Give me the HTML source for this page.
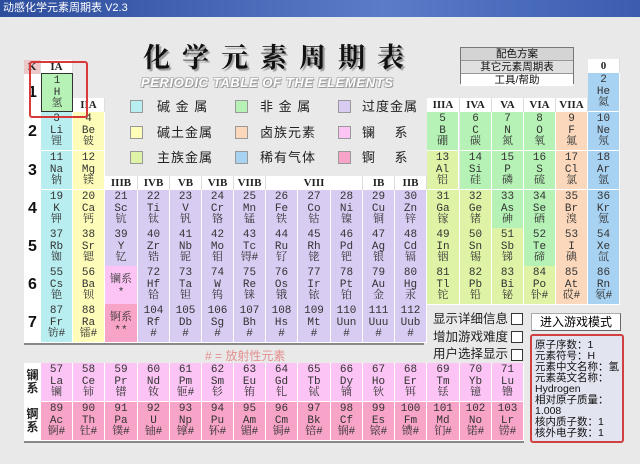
<!DOCTYPE html>
<html><head><meta charset="utf-8"><style>
*{margin:0;padding:0;box-sizing:border-box}
body{width:640px;height:464px;overflow:hidden;background:#e9e9e9;position:relative;font-family:"Liberation Sans","Noto Sans CJK SC",sans-serif}
.tb{position:absolute;left:0;top:0;width:640px;height:17px;background:linear-gradient(90deg,#2c4c9c,#5a7cc8 60%,#3c5cb0);color:#fff;font-size:11px;line-height:17px;padding-left:3px}
.e{position:absolute;width:32px;height:39px;border-right:1px solid #fff;border-bottom:1px solid #fff;text-align:center;font-family:"Liberation Mono","Noto Serif CJK SC",monospace;font-size:11px;line-height:11.5px;padding-top:2px;color:#333}
.a{background:#b8eef0}.b{background:#fdfcb8}.t{background:#d8ccf2}.n{background:#b6f2b6}.h{background:#fbd8bc}.g{background:#a8d2f2}.m{background:#dff3a6}.l{background:#fbc4f4}.k{background:#f8a4c8}
.hd{position:absolute;height:14px;background:#fff;font-family:"Liberation Serif",serif;font-weight:bold;font-size:11px;line-height:14px;text-align:center;color:#222;border-right:1px solid #ddd}
.pl{position:absolute;left:24px;width:17px;font:bold 16px "Liberation Sans",sans-serif;text-align:center;color:#111}
.sq{position:absolute;width:13px;height:13px;border:1px solid #999}
.lt{position:absolute;font-size:13px;color:#222;line-height:14px;letter-spacing:1px;white-space:nowrap}
.cb{position:absolute;width:12px;height:12px;border:1px solid #333;background:#fff}
</style></head><body>
<div class="tb">动感化学元素周期表 V2.3</div>
<div style="position:absolute;left:143px;top:36px;font:bold 27px 'Noto Serif CJK SC',serif;letter-spacing:12px;color:#111;text-shadow:2px 2px 1px #999">化学元素周期表</div>
<div style="position:absolute;left:141px;top:75px;font:bold italic 13px 'Liberation Sans',sans-serif;color:#fff;letter-spacing:0.6px;text-shadow:1px 1px 0 #999,-1px -1px 0 #bbb,1px -1px 0 #bbb,-1px 1px 0 #bbb">PERIODIC TABLE OF THE ELEMENTS</div>

<div style="position:absolute;left:460px;top:47px;width:114px;height:37px;border:1px solid #777;font-size:10.5px;text-align:center;line-height:12px;color:#111">
<div style="background:#d4d4d4;border-bottom:1px solid #999">配色方案</div>
<div style="background:#e0e0e0;border-bottom:1px solid #999">其它元素周期表</div>
<div style="background:#fff">工具/帮助</div></div>

<div class="sq a" style="left:130px;top:100px"></div><div class="lt" style="left:157px;top:100px">碱 金 属</div>
<div class="sq b" style="left:130px;top:126px"></div><div class="lt" style="left:157px;top:126px">碱土金属</div>
<div class="sq m" style="left:130px;top:151px"></div><div class="lt" style="left:157px;top:151px">主族金属</div>
<div class="sq n" style="left:235px;top:100px"></div><div class="lt" style="left:260px;top:100px">非 金 属</div>
<div class="sq h" style="left:235px;top:126px"></div><div class="lt" style="left:260px;top:126px">卤族元素</div>
<div class="sq g" style="left:235px;top:151px"></div><div class="lt" style="left:260px;top:151px">稀有气体</div>
<div class="sq t" style="left:338px;top:100px"></div><div class="lt" style="left:362px;top:100px">过度金属</div>
<div class="sq l" style="left:338px;top:126px"></div><div class="lt" style="left:362px;top:126px">镧&nbsp;&nbsp;&nbsp;&nbsp;系</div>
<div class="sq k" style="left:338px;top:151px"></div><div class="lt" style="left:362px;top:151px">锕&nbsp;&nbsp;&nbsp;&nbsp;系</div>

<div style="position:absolute;left:24px;top:73px;width:17px;height:270px;background:#fff"></div>
<div style="position:absolute;left:24px;top:343px;width:400px;height:2px;background:#888"></div>
<div class="hd" style="left:24px;top:60px;width:17px;background:#ecc8c8">K</div>
<div class="hd" style="left:41px;top:60px;width:32px">IA</div>
<div class="hd" style="left:73px;top:98px;width:32px">IIA</div>
<div class="hd" style="left:588px;top:59px;width:32px">0</div>
<div class="pl" style="top:84px">1</div><div class="pl" style="top:123px">2</div><div class="pl" style="top:162px">3</div><div class="pl" style="top:200px">4</div><div class="pl" style="top:238px">5</div><div class="pl" style="top:276px">6</div><div class="pl" style="top:314px">7</div>
<div class="hd" style="left:105px;top:176px;width:33px">IIIB</div><div class="hd" style="left:138px;top:176px;width:32px">IVB</div><div class="hd" style="left:170px;top:176px;width:32px">VB</div><div class="hd" style="left:202px;top:176px;width:32px">VIB</div><div class="hd" style="left:234px;top:176px;width:32px">VIIB</div><div class="hd" style="left:266px;top:176px;width:97px">VIII</div><div class="hd" style="left:363px;top:176px;width:32px">IB</div><div class="hd" style="left:395px;top:176px;width:32px">IIB</div>
<div class="hd" style="left:427px;top:98px;width:33px">IIIA</div><div class="hd" style="left:460px;top:98px;width:32px">IVA</div><div class="hd" style="left:492px;top:98px;width:32px">VA</div><div class="hd" style="left:524px;top:98px;width:32px">VIA</div><div class="hd" style="left:556px;top:98px;width:32px">VIIA</div>

<div class="e n" style="left:41px;top:73px;border:1px solid #333">1<br>H<br>氢</div>
<div class="e g" style="left:588px;top:73px">2<br>He<br>氦</div>
<div class="e a" style="left:41px;top:112px">3<br>Li<br>锂</div><div class="e b" style="left:73px;top:112px">4<br>Be<br>铍</div>
<div class="e n" style="left:427px;top:112px">5<br>B<br>硼</div><div class="e n" style="left:460px;top:112px">6<br>C<br>碳</div><div class="e n" style="left:492px;top:112px">7<br>N<br>氮</div><div class="e n" style="left:524px;top:112px">8<br>O<br>氧</div><div class="e h" style="left:556px;top:112px">9<br>F<br>氟</div><div class="e g" style="left:588px;top:112px">10<br>Ne<br>氖</div>
<div class="e a" style="left:41px;top:151px">11<br>Na<br>钠</div><div class="e b" style="left:73px;top:151px">12<br>Mg<br>镁</div>
<div class="e m" style="left:427px;top:151px">13<br>Al<br>铝</div><div class="e n" style="left:460px;top:151px">14<br>Si<br>硅</div><div class="e n" style="left:492px;top:151px">15<br>P<br>磷</div><div class="e n" style="left:524px;top:151px">16<br>S<br>硫</div><div class="e h" style="left:556px;top:151px">17<br>Cl<br>氯</div><div class="e g" style="left:588px;top:151px">18<br>Ar<br>氩</div>

<div class="e a" style="left:41px;top:190px">19<br>K<br>钾</div><div class="e b" style="left:73px;top:190px">20<br>Ca<br>钙</div><div class="e t" style="left:105px;top:190px;width:33px">21<br>Sc<br>钪</div><div class="e t" style="left:138px;top:190px">22<br>Ti<br>钛</div><div class="e t" style="left:170px;top:190px">23<br>V<br>钒</div><div class="e t" style="left:202px;top:190px">24<br>Cr<br>铬</div><div class="e t" style="left:234px;top:190px">25<br>Mn<br>锰</div><div class="e t" style="left:266px;top:190px">26<br>Fe<br>铁</div><div class="e t" style="left:298px;top:190px;width:33px">27<br>Co<br>钴</div><div class="e t" style="left:331px;top:190px">28<br>Ni<br>镍</div><div class="e t" style="left:363px;top:190px">29<br>Cu<br>铜</div><div class="e t" style="left:395px;top:190px">30<br>Zn<br>锌</div><div class="e m" style="left:427px;top:190px;width:33px">31<br>Ga<br>镓</div><div class="e m" style="left:460px;top:190px">32<br>Ge<br>锗</div><div class="e n" style="left:492px;top:190px">33<br>As<br>砷</div><div class="e n" style="left:524px;top:190px">34<br>Se<br>硒</div><div class="e h" style="left:556px;top:190px">35<br>Br<br>溴</div><div class="e g" style="left:588px;top:190px">36<br>Kr<br>氪</div>

<div class="e a" style="left:41px;top:228px">37<br>Rb<br>铷</div><div class="e b" style="left:73px;top:228px">38<br>Sr<br>锶</div><div class="e t" style="left:105px;top:228px;width:33px">39<br>Y<br>钇</div><div class="e t" style="left:138px;top:228px">40<br>Zr<br>锆</div><div class="e t" style="left:170px;top:228px">41<br>Nb<br>铌</div><div class="e t" style="left:202px;top:228px">42<br>Mo<br>钼</div><div class="e t" style="left:234px;top:228px">43<br>Tc<br>锝#</div><div class="e t" style="left:266px;top:228px">44<br>Ru<br>钌</div><div class="e t" style="left:298px;top:228px;width:33px">45<br>Rh<br>铑</div><div class="e t" style="left:331px;top:228px">46<br>Pd<br>钯</div><div class="e t" style="left:363px;top:228px">47<br>Ag<br>银</div><div class="e t" style="left:395px;top:228px">48<br>Cd<br>镉</div><div class="e m" style="left:427px;top:228px;width:33px">49<br>In<br>铟</div><div class="e m" style="left:460px;top:228px">50<br>Sn<br>锡</div><div class="e m" style="left:492px;top:228px">51<br>Sb<br>锑</div><div class="e n" style="left:524px;top:228px">52<br>Te<br>碲</div><div class="e h" style="left:556px;top:228px">53<br>I<br>碘</div><div class="e g" style="left:588px;top:228px">54<br>Xe<br>氙</div>

<div class="e a" style="left:41px;top:266px">55<br>Cs<br>铯</div><div class="e b" style="left:73px;top:266px">56<br>Ba<br>钡</div><div class="e l" style="left:105px;top:266px;width:33px;padding-top:8px;line-height:13px">镧系<br>*</div><div class="e t" style="left:138px;top:266px">72<br>Hf<br>铪</div><div class="e t" style="left:170px;top:266px">73<br>Ta<br>钽</div><div class="e t" style="left:202px;top:266px">74<br>W<br>钨</div><div class="e t" style="left:234px;top:266px">75<br>Re<br>铼</div><div class="e t" style="left:266px;top:266px">76<br>Os<br>锇</div><div class="e t" style="left:298px;top:266px;width:33px">77<br>Ir<br>铱</div><div class="e t" style="left:331px;top:266px">78<br>Pt<br>铂</div><div class="e t" style="left:363px;top:266px">79<br>Au<br>金</div><div class="e t" style="left:395px;top:266px">80<br>Hg<br>汞</div><div class="e m" style="left:427px;top:266px;width:33px">81<br>Tl<br>铊</div><div class="e m" style="left:460px;top:266px">82<br>Pb<br>铅</div><div class="e m" style="left:492px;top:266px">83<br>Bi<br>铋</div><div class="e m" style="left:524px;top:266px">84<br>Po<br>钋#</div><div class="e h" style="left:556px;top:266px">85<br>At<br>砹#</div><div class="e g" style="left:588px;top:266px">86<br>Rn<br>氡#</div>

<div class="e a" style="left:41px;top:304px">87<br>Fr<br>钫#</div><div class="e b" style="left:73px;top:304px">88<br>Ra<br>镭#</div><div class="e k" style="left:105px;top:304px;width:33px;padding-top:8px;line-height:13px">锕系<br>**</div><div class="e t" style="left:138px;top:304px">104<br>Rf<br>#</div><div class="e t" style="left:170px;top:304px">105<br>Db<br>#</div><div class="e t" style="left:202px;top:304px">106<br>Sg<br>#</div><div class="e t" style="left:234px;top:304px">107<br>Bh<br>#</div><div class="e t" style="left:266px;top:304px">108<br>Hs<br>#</div><div class="e t" style="left:298px;top:304px;width:33px">109<br>Mt<br>#</div><div class="e t" style="left:331px;top:304px">110<br>Uun<br>#</div><div class="e t" style="left:363px;top:304px">111<br>Uuu<br>#</div><div class="e t" style="left:395px;top:304px">112<br>Uub<br>#</div>

<div style="position:absolute;left:205px;top:347px;font-size:12px;color:#e39090">#  =  放射性元素</div>

<div style="position:absolute;left:24px;top:363px;width:17px;height:78px;background:#fff;font-size:12px;font-weight:bold;line-height:13px;text-align:center;padding-top:6px;color:#222">镧<br>系<br><br>锕<br>系</div>
<div style="position:absolute;left:24px;top:441px;width:500px;height:2px;background:#888"></div>
<div class="e l" style="left:41px;top:363px">57<br>La<br>镧</div><div class="e l" style="left:73px;top:363px">58<br>Ce<br>铈</div><div class="e l" style="left:105px;top:363px;width:33px">59<br>Pr<br>镨</div><div class="e l" style="left:138px;top:363px">60<br>Nd<br>钕</div><div class="e l" style="left:170px;top:363px">61<br>Pm<br>钷#</div><div class="e l" style="left:202px;top:363px">62<br>Sm<br>钐</div><div class="e l" style="left:234px;top:363px">63<br>Eu<br>铕</div><div class="e l" style="left:266px;top:363px">64<br>Gd<br>钆</div><div class="e l" style="left:298px;top:363px;width:33px">65<br>Tb<br>铽</div><div class="e l" style="left:331px;top:363px">66<br>Dy<br>镝</div><div class="e l" style="left:363px;top:363px">67<br>Ho<br>钬</div><div class="e l" style="left:395px;top:363px">68<br>Er<br>铒</div><div class="e l" style="left:427px;top:363px;width:33px">69<br>Tm<br>铥</div><div class="e l" style="left:460px;top:363px">70<br>Yb<br>镱</div><div class="e l" style="left:492px;top:363px">71<br>Lu<br>镥</div>
<div class="e k" style="left:41px;top:402px">89<br>Ac<br>锕#</div><div class="e k" style="left:73px;top:402px">90<br>Th<br>钍#</div><div class="e k" style="left:105px;top:402px;width:33px">91<br>Pa<br>镤#</div><div class="e k" style="left:138px;top:402px">92<br>U<br>铀#</div><div class="e k" style="left:170px;top:402px">93<br>Np<br>镎#</div><div class="e k" style="left:202px;top:402px">94<br>Pu<br>钚#</div><div class="e k" style="left:234px;top:402px">95<br>Am<br>镅#</div><div class="e k" style="left:266px;top:402px">96<br>Cm<br>锔#</div><div class="e k" style="left:298px;top:402px;width:33px">97<br>Bk<br>锫#</div><div class="e k" style="left:331px;top:402px">98<br>Cf<br>锎#</div><div class="e k" style="left:363px;top:402px">99<br>Es<br>锿#</div><div class="e k" style="left:395px;top:402px">100<br>Fm<br>镄#</div><div class="e k" style="left:427px;top:402px;width:33px">101<br>Md<br>钔#</div><div class="e k" style="left:460px;top:402px">102<br>No<br>锘#</div><div class="e k" style="left:492px;top:402px">103<br>Lr<br>铹#</div>

<div style="position:absolute;left:29px;top:61px;width:59px;height:57px;border:2px solid #d83a3a;border-radius:3px"></div>

<div class="lt" style="left:433px;top:312px;letter-spacing:0;font-size:12.5px">显示详细信息</div><div class="cb" style="left:511px;top:313px"></div>
<div class="lt" style="left:433px;top:330px;letter-spacing:0;font-size:12.5px">增加游戏难度</div><div class="cb" style="left:511px;top:331px"></div>
<div class="lt" style="left:433px;top:347px;letter-spacing:0;font-size:12.5px">用户选择显示</div><div class="cb" style="left:511px;top:349px"></div>
<div style="position:absolute;left:531px;top:313px;width:90px;height:18px;background:#fff;border:1px solid #aaa;border-right-color:#666;border-bottom-color:#666;font-size:12px;line-height:16px;text-align:center">进入游戏模式</div>
<div style="position:absolute;left:530px;top:334px;width:94px;height:109px;background:#e2e4f0;border:2px solid #d04040;border-radius:3px;font-size:10.5px;line-height:11px;padding:4px 0 0 3px;color:#111;white-space:nowrap;overflow:hidden">原子序数：1<br>元素符号：H<br>元素中文名称：氢<br>元素英文名称：<br>Hydrogen<br>相对原子质量：<br>1.008<br>核内质子数：1<br>核外电子数：1</div>
</body></html>
